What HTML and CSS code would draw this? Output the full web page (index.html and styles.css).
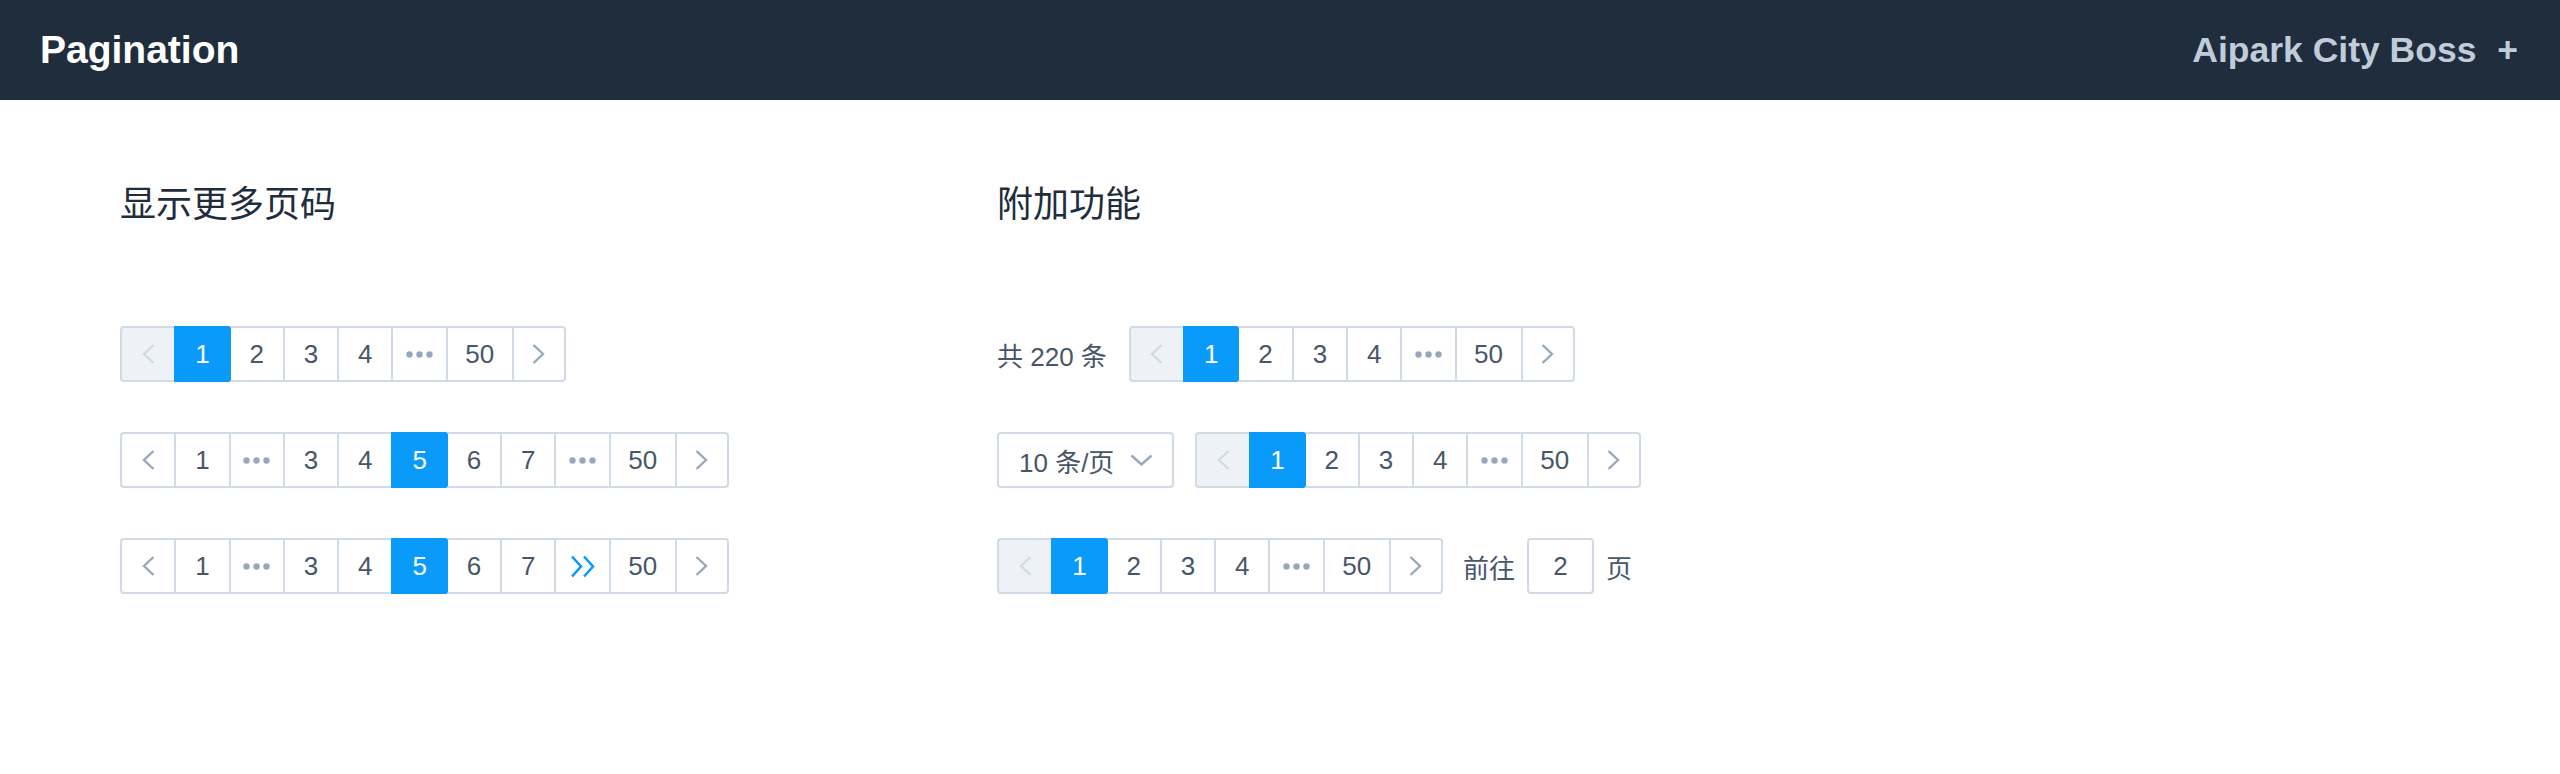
FILE: index.html
```html
<!DOCTYPE html>
<html lang="zh-CN">
<head>
    <meta charset="UTF-8">
    <meta name="viewport" content="width=device-width, initial-scale=1.0">
    <title>Pagination</title>
    <link rel="stylesheet" href="styles.css">
</head>
<body>

<div class="header">
    <span class="header-title">Pagination</span>
    <span class="header-user">Aipark City Boss <span class="header-plus">+</span></span>
</div>

<div class="main">

    <div class="section">
        <h2>显示更多页码</h2>

        <div class="row">
            <div class="pager">
                <span class="pg-item btn-prev disabled">
                    <svg width="13" height="20" viewBox="0 0 13 20"><polyline points="11.5,1 2,10 11.5,19"/></svg>
                </span>
                <span class="pg-item active">1</span>
                <span class="pg-item">2</span>
                <span class="pg-item">3</span>
                <span class="pg-item">4</span>
                <span class="pg-item more">
                    <svg width="27" height="7" viewBox="0 0 27 7"><circle cx="3.5" cy="3.5" r="3.2"/><circle cx="13.5" cy="3.5" r="3.2"/><circle cx="23.5" cy="3.5" r="3.2"/></svg>
                </span>
                <span class="pg-item">50</span>
                <span class="pg-item btn-next">
                    <svg width="13" height="20" viewBox="0 0 13 20"><polyline points="1.5,1 11,10 1.5,19"/></svg>
                </span>
            </div>
        </div>

        <div class="row">
            <div class="pager">
                <span class="pg-item btn-prev">
                    <svg width="13" height="20" viewBox="0 0 13 20"><polyline points="11.5,1 2,10 11.5,19"/></svg>
                </span>
                <span class="pg-item">1</span>
                <span class="pg-item more">
                    <svg width="27" height="7" viewBox="0 0 27 7"><circle cx="3.5" cy="3.5" r="3.2"/><circle cx="13.5" cy="3.5" r="3.2"/><circle cx="23.5" cy="3.5" r="3.2"/></svg>
                </span>
                <span class="pg-item">3</span>
                <span class="pg-item">4</span>
                <span class="pg-item active">5</span>
                <span class="pg-item">6</span>
                <span class="pg-item">7</span>
                <span class="pg-item more">
                    <svg width="27" height="7" viewBox="0 0 27 7"><circle cx="3.5" cy="3.5" r="3.2"/><circle cx="13.5" cy="3.5" r="3.2"/><circle cx="23.5" cy="3.5" r="3.2"/></svg>
                </span>
                <span class="pg-item">50</span>
                <span class="pg-item btn-next">
                    <svg width="13" height="20" viewBox="0 0 13 20"><polyline points="1.5,1 11,10 1.5,19"/></svg>
                </span>
            </div>
        </div>

        <div class="row">
            <div class="pager">
                <span class="pg-item btn-prev">
                    <svg width="13" height="20" viewBox="0 0 13 20"><polyline points="11.5,1 2,10 11.5,19"/></svg>
                </span>
                <span class="pg-item">1</span>
                <span class="pg-item more">
                    <svg width="27" height="7" viewBox="0 0 27 7"><circle cx="3.5" cy="3.5" r="3.2"/><circle cx="13.5" cy="3.5" r="3.2"/><circle cx="23.5" cy="3.5" r="3.2"/></svg>
                </span>
                <span class="pg-item">3</span>
                <span class="pg-item">4</span>
                <span class="pg-item active">5</span>
                <span class="pg-item">6</span>
                <span class="pg-item">7</span>
                <span class="pg-item quick-next">
                    <svg width="25" height="23" viewBox="0 0 25 23"><polyline points="2,1.5 11,11.5 2,21.5"/><polyline points="14,1.5 23,11.5 14,21.5"/></svg>
                </span>
                <span class="pg-item">50</span>
                <span class="pg-item btn-next">
                    <svg width="13" height="20" viewBox="0 0 13 20"><polyline points="1.5,1 11,10 1.5,19"/></svg>
                </span>
            </div>
        </div>
    </div>

    <div class="section">
        <h2>附加功能</h2>

        <div class="row">
            <span class="total">共 220 条</span>
            <div class="pager">
                <span class="pg-item btn-prev disabled">
                    <svg width="13" height="20" viewBox="0 0 13 20"><polyline points="11.5,1 2,10 11.5,19"/></svg>
                </span>
                <span class="pg-item active">1</span>
                <span class="pg-item">2</span>
                <span class="pg-item">3</span>
                <span class="pg-item">4</span>
                <span class="pg-item more">
                    <svg width="27" height="7" viewBox="0 0 27 7"><circle cx="3.5" cy="3.5" r="3.2"/><circle cx="13.5" cy="3.5" r="3.2"/><circle cx="23.5" cy="3.5" r="3.2"/></svg>
                </span>
                <span class="pg-item">50</span>
                <span class="pg-item btn-next">
                    <svg width="13" height="20" viewBox="0 0 13 20"><polyline points="1.5,1 11,10 1.5,19"/></svg>
                </span>
            </div>
        </div>

        <div class="row">
            <div class="sizes">
                <span>10 条/页</span>
                <svg width="23" height="12" viewBox="0 0 23 12"><polyline points="1.5,1.5 11.5,10.5 21.5,1.5"/></svg>
            </div>
            <div class="pager">
                <span class="pg-item btn-prev disabled">
                    <svg width="13" height="20" viewBox="0 0 13 20"><polyline points="11.5,1 2,10 11.5,19"/></svg>
                </span>
                <span class="pg-item active">1</span>
                <span class="pg-item">2</span>
                <span class="pg-item">3</span>
                <span class="pg-item">4</span>
                <span class="pg-item more">
                    <svg width="27" height="7" viewBox="0 0 27 7"><circle cx="3.5" cy="3.5" r="3.2"/><circle cx="13.5" cy="3.5" r="3.2"/><circle cx="23.5" cy="3.5" r="3.2"/></svg>
                </span>
                <span class="pg-item">50</span>
                <span class="pg-item btn-next">
                    <svg width="13" height="20" viewBox="0 0 13 20"><polyline points="1.5,1 11,10 1.5,19"/></svg>
                </span>
            </div>
        </div>

        <div class="row">
            <div class="pager">
                <span class="pg-item btn-prev disabled">
                    <svg width="13" height="20" viewBox="0 0 13 20"><polyline points="11.5,1 2,10 11.5,19"/></svg>
                </span>
                <span class="pg-item active">1</span>
                <span class="pg-item">2</span>
                <span class="pg-item">3</span>
                <span class="pg-item">4</span>
                <span class="pg-item more">
                    <svg width="27" height="7" viewBox="0 0 27 7"><circle cx="3.5" cy="3.5" r="3.2"/><circle cx="13.5" cy="3.5" r="3.2"/><circle cx="23.5" cy="3.5" r="3.2"/></svg>
                </span>
                <span class="pg-item">50</span>
                <span class="pg-item btn-next">
                    <svg width="13" height="20" viewBox="0 0 13 20"><polyline points="1.5,1 11,10 1.5,19"/></svg>
                </span>
            </div>
            <span class="jump">前往</span>
            <span class="jump-input">2</span>
            <span class="jump-unit">页</span>
        </div>
    </div>

</div>

</body>
</html>
```

FILE: styles.css
```css
body {
    font-family: "Liberation Sans", "Noto Sans CJK SC", sans-serif;
    background-color: #fff;
    color: #48576a;
    margin: 0;
}

.header {
    display: flex;
    align-items: center;
    justify-content: space-between;
    height: 100px;
    padding: 0 42px 0 40px;
    background-color: #1f2d3d;
}

.header-title {
    color: #fff;
    font-size: 39px;
    font-weight: bold;
}

.header-user {
    color: #c0ccda;
    font-size: 35.5px;
    font-weight: bold;
}

.header-plus {
    margin-left: 11px;
}

.main {
    display: grid;
    grid-template-columns: 877px 877px;
    padding: 80px 120px 0;
}

h2 {
    margin: 0 0 96px;
    font-size: 36px;
    line-height: 50px;
    font-weight: normal;
    color: #1f2d3d;
}

.row {
    display: flex;
    align-items: center;
    height: 56px;
    margin-bottom: 50px;
    font-size: 26px;
}

/* pager */
.pager {
    display: flex;
}

.pg-item {
    display: flex;
    align-items: center;
    justify-content: center;
    box-sizing: border-box;
    min-width: 54.3px;
    height: 56px;
    padding: 0 17.5px;
    border: 2px solid #d1dbe5;
    border-right: 0;
    background-color: #fff;
    color: #475669;
    font-size: 26px;
}

.pg-item:last-child {
    border-right: 2px solid #d1dbe5;
}

.pg-item svg {
    fill: none;
    stroke: #97a8be;
    stroke-width: 2.4;
}

.btn-prev {
    border-radius: 4px 0 0 4px;
}

.btn-next {
    border-radius: 0 4px 4px 0;
}

.pg-item.disabled {
    background-color: #eef1f6;
}

.pg-item.disabled svg {
    stroke: #d1dbe5;
}

.pg-item.more,
.pg-item.quick-next {
    padding: 0;
}

.pg-item.more svg {
    fill: #97a8be;
    stroke: none;
}

.pg-item.quick-next svg {
    stroke: #0a9bfa;
    stroke-width: 2.6;
}

.pg-item.active {
    background-color: #0a9bfa;
    border-color: #0a9bfa;
    color: #fff;
}

.pg-item.active + .pg-item {
    border-left-color: #0a9bfa;
}

/* extras */
.total {
    margin-right: 22px;
}

.sizes {
    display: flex;
    align-items: center;
    justify-content: space-between;
    box-sizing: border-box;
    width: 177px;
    height: 56px;
    padding: 0 19px 0 20px;
    margin-right: 21px;
    border: 2px solid #d1dbe5;
    border-radius: 4px;
    color: #475669;
}

.sizes svg {
    fill: none;
    stroke: #99a9bf;
    stroke-width: 2.4;
}

.jump {
    margin-left: 20px;
}

.jump-input {
    display: flex;
    align-items: center;
    justify-content: center;
    box-sizing: border-box;
    width: 67px;
    height: 56px;
    margin: 0 12px;
    border: 2px solid #d1dbe5;
    border-radius: 4px;
    color: #475669;
}
```
